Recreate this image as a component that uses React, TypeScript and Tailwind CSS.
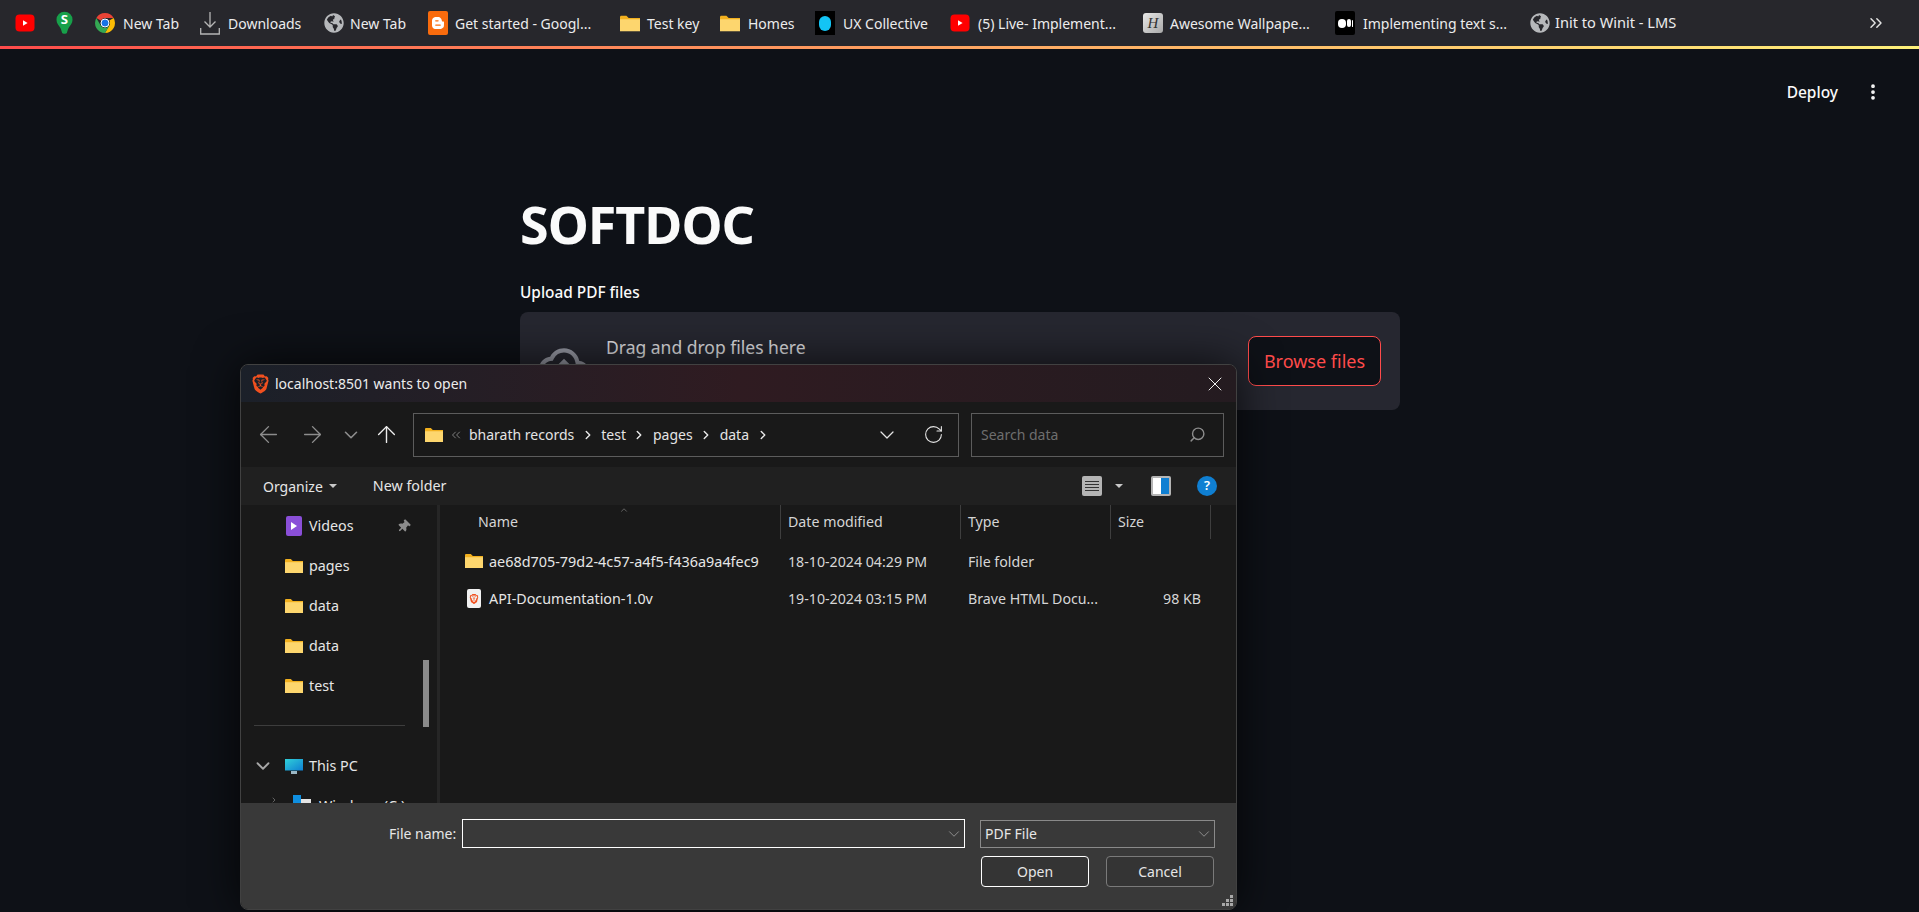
import React from "react";
import { ArrowLeft, ArrowRight, ArrowUp, ChevronDown, ChevronRight, ChevronsLeft, ChevronsRight, EllipsisVertical, RotateCw, Search, X } from "lucide-react";
import { FaBloggerB, FaGlobeAmericas, FaThumbtack } from "react-icons/fa";
import { MdOutlineCloudUpload } from "react-icons/md";
import { SiBrave } from "react-icons/si";

const Folder = ({ className = "w-[18px] h-[14px]" }: { className?: string }) => (
  <svg viewBox="0 0 18 14" className={className}>
    <path d="M0 1.2C0 .5.5 0 1.2 0h4.6l2 2H18v3H0z" fill="#f2b01e" />
    <path d="M0 3.2h18V14H0z" fill="#fdd66e" />
  </svg>
);

const YouTube = () => (
  <svg viewBox="0 0 20 20" className="w-5 h-5">
    <rect x="0.5" y="1.500" width="19" height="17" rx="4" fill="#f00" />
    <path d="M8 7.200v5.600l4.600-2.800z" fill="#fff" />
  </svg>
);

const SPin = () => (
  <svg viewBox="0 0 18 24" className="w-[17px] h-[24px]">
    <path d="M9 0a8.500 8.500 0 0 1 8.500 8.500c0 3.700-2.500 6-4 8.500-1 1.700-1.500 4-2 5.500-.4 1-4.600 1-5 0-.5-1.500-1-3.800-2-5.500C3 14.500.5 12.200.5 8.500A8.500 8.500 0 0 1 9 0z" fill="#17a04a" />
    <text x="9" y="13.500" textAnchor="middle" fontSize="14" fontWeight="700" fill="#fff" fontFamily="Noto Sans, sans-serif">S</text>
  </svg>
);

const Chrome = () => (
  <svg viewBox="0 0 20 20" className="w-5 h-5">
    <path d="M10 0a10 10 0 0 1 8.660 5H10a5 5 0 0 0-4.330 2.500L1.340 5A10 10 0 0 1 10 0z" fill="#ea4335" />
    <path d="M18.660 5A10 10 0 0 1 10 20l4.330-7.500A5 5 0 0 0 14.330 7.500z" fill="#fbbc04" />
    <path d="M10 20A10 10 0 0 1 1.340 5l4.330 7.500A5 5 0 0 0 14.330 12.500z" fill="#34a853" />
    <circle cx="10" cy="10" r="4" fill="#1a73e8" stroke="#fff" strokeWidth="1" />
  </svg>
);

const DownloadTray = () => (
  <svg viewBox="0 0 20 24" className="w-5 h-6" fill="none" stroke="#b5b5b5" strokeWidth="1.300">
    <path d="M10 1v15M4.500 10.500 10 16l5.500-5.500M.7 17v6h18.600v-6" />
  </svg>
);

const Globe = () => <FaGlobeAmericas className="w-5 h-5 text-[#b6b8bb]" />;

const Blogger = () => (
  <span className="w-5 h-6 rounded-[2px] bg-[#f96b0d] flex items-center justify-center">
    <FaBloggerB className="w-3 h-4 text-white" />
  </span>
);

const UxDot = () => (
  <span className="w-5 h-6 bg-black flex items-center justify-center">
    <span className="w-[12px] h-[15px] rounded-full bg-[#13c4f5]" />
  </span>
);

const WallpaperH = () => (
  <span className="w-5 h-5 rounded-[3px] bg-gradient-to-br from-[#e8e8e8] to-[#a9a9a9] flex items-center justify-center font-['Liberation_Serif',serif] italic text-[15px] text-[#333]">
    H
  </span>
);

const Medium = () => (
  <span className="w-5 h-6 rounded-[2px] bg-black flex items-center justify-center gap-[1px]">
    <span className="w-[8px] h-[9px] rounded-full bg-white" />
    <span className="w-[4px] h-[8px] rounded-full bg-white" />
    <span className="w-[1px] h-[7px] rounded-full bg-white" />
  </span>
);

const bookmarks = [
  { icon: <YouTube />, label: "", cls: "w-[41px] gap-[8px]", text: "text-[14px]" },
  { icon: <SPin />, label: "", cls: "w-[39px] gap-[8px]", text: "text-[14px]" },
  { icon: <Chrome />, label: "New Tab", cls: "w-[105px] gap-[8px]", text: "text-[14px]" },
  { icon: <DownloadTray />, label: "Downloads", cls: "w-[124px] gap-[8px]", text: "text-[14px]" },
  { icon: <Globe />, label: "New Tab", cls: "w-[104px] gap-[6px]", text: "text-[14px]" },
  { icon: <Blogger />, label: "Get started - Googl...", cls: "w-[192px] gap-[7px]", text: "text-[14px]" },
  { icon: <Folder className="w-5 h-[17px]" />, label: "Test key", cls: "w-[100px] gap-[7px]", text: "text-[14px]" },
  { icon: <Folder className="w-5 h-[17px]" />, label: "Homes", cls: "w-[95px] gap-[8px]", text: "text-[14px]" },
  { icon: <UxDot />, label: "UX Collective", cls: "w-[135px] gap-[8px]", text: "text-[14px]" },
  { icon: <YouTube />, label: "(5) Live- Implement...", cls: "w-[193px] gap-[8px]", text: "text-[14px]" },
  { icon: <WallpaperH />, label: "Awesome Wallpape...", cls: "w-[192px] gap-[7px]", text: "text-[14px]" },
  { icon: <Medium />, label: "Implementing text s...", cls: "w-[195px] gap-[8px]", text: "text-[14px]" },
  { icon: <Globe />, label: "Init to Winit - LMS", cls: "w-[200px] gap-[5px]", text: "text-[14.600px]" },
];

const BookmarkBar = () => (
  <div className="h-[46px] bg-[#27272c] flex items-center pl-[15px] relative">
    {bookmarks.map((b, i) => (
      <div key={i} className={`${b.cls} flex items-center shrink-0`}>
        {b.icon}
        {b.label && <span className={`${b.text} text-[#ececec] whitespace-nowrap`}>{b.label}</span>}
      </div>
    ))}
    <ChevronsRight className="ml-auto mr-[33px] w-[20px] h-[20px] text-[#e4e4e4]" strokeWidth={1.750} />
  </div>
);

const Uploader = () => (
  <div className="ml-[520px] w-[880px] font-['Noto_Sans',sans-serif]">
    <h1 className="mt-[57px] h-[64px] text-[52px] tracking-[-1px] leading-[64px] font-bold text-[#fafafa]">SOFTDOC</h1>
    <div className="mt-[25px] h-[24px] leading-[24px] text-[15.400px] font-medium text-[#fafafa]">Upload PDF files</div>
    <div className="mt-[7px] h-[98px] rounded-[8px] bg-[#262730] flex justify-between items-center pr-[19px] pl-[19px]">
      <div className="self-start pt-[22px] flex items-start">
        <MdOutlineCloudUpload className="mt-[6px] w-[50px] h-[50px] text-[#9a9ca7]" />
        <span className="ml-[17px] leading-[27px] text-[17.500px] text-[#e0e0e3]">Drag and drop files here</span>
      </div>
      <button className="w-[133px] h-[50px] rounded-[8px] border border-[#ff4b4b] bg-[#0e1117] text-[18px] text-[#ff4b4b]">
        Browse files
      </button>
    </div>
  </div>
);

const navRows = ["pages", "data", "data", "test"];

const NavPane = () => (
  <div className="w-[196px] shrink-0 flex">
    <div className="w-[182px] shrink-0 pt-[1px]">
      <div className="h-[40px] flex items-center pl-[45px]">
        <svg viewBox="0 0 16 20" className="w-[16px] h-[20px]">
          <rect width="16" height="20" rx="2" fill="#8a4fd8" />
          <path d="M5 6v8l6-4z" fill="#fff" />
        </svg>
        <span className="ml-[7px] text-[14.300px] text-[#e6e6e6]">Videos</span>
        <FaThumbtack className="ml-auto mr-[13px] w-[13px] h-[13px] rotate-45 text-[#8c8c8c]" />
      </div>
      {navRows.map((r, i) => (
        <div key={i} className="h-[40px] flex items-center pl-[44px]">
          <Folder />
          <span className="ml-[6px] text-[14.300px] text-[#e6e6e6]">{r}</span>
        </div>
      ))}
      <div className="h-[40px] flex items-center pl-[13px] pr-[18px]">
        <div className="w-full h-px mt-[-1px] bg-[#3d3d3d]" />
      </div>
      <div className="h-[40px] flex items-center pl-[11px]">
        <ChevronDown className="w-[22px] h-[22px] text-[#a8a8a8]" strokeWidth={2} />
        <svg viewBox="0 0 18 15" className="ml-[11px] w-[18px] h-[15px]">
          <defs>
            <linearGradient id="pcScreen" x1="0" y1="0" x2="1" y2="1">
              <stop offset="0" stopColor="#30d0d8" />
              <stop offset="1" stopColor="#0f7fd2" />
            </linearGradient>
          </defs>
          <rect width="18" height="11.500" fill="url(#pcScreen)" />
          <rect x="6" y="12" width="6" height="3" fill="#9bb7c4" />
        </svg>
        <span className="ml-[6px] text-[14.300px] text-[#e6e6e6]">This PC</span>
      </div>
      <div className="h-[40px] flex items-center pl-[29px]">
        <ChevronRight className="w-[8px] h-[8px] self-start mt-[10px] text-[#888]" />
        <span className="ml-[15px] w-[8px] h-[8px] self-start mt-[9px] bg-[#0f8fe0]" />
        <span className="w-[10px] h-[8px] self-start mt-[13px] bg-[#e5e5e5]" />
        <span className="ml-[8px] text-[14.300px] text-[#e6e6e6] whitespace-nowrap">Windows (C:)</span>
      </div>
    </div>
    <div className="w-[6px] h-[67px] mt-[155px] bg-[#8a8a8a]" />
  </div>
);

const headerCell = "h-[34px] flex items-center pl-[7px] border-r border-[#3e3e3e] text-[14.200px] text-[#d5d5d5]";
const cell = "pl-[7px] text-[14.200px] text-[#d6d6d6] whitespace-nowrap";

const FileList = () => (
  <div className="flex-1 border-l-[3px] border-[#262626] relative">
    <ChevronDown className="absolute left-[178px] top-[0px] w-[12px] h-[10px] rotate-180 text-[#8f8f8f]" strokeWidth={1.500} />
    <div className="grid grid-cols-[341px_180px_150px_100px]">
      <div className={`${headerCell} pl-[38px]`}>Name</div>
      <div className={headerCell}>Date modified</div>
      <div className={headerCell}>Type</div>
      <div className={headerCell}>Size</div>
    </div>
    <div className="mt-[4px] grid grid-cols-[341px_180px_150px_100px] grid-rows-[37px_37px] items-center">
      <div className="flex items-center pl-[25px]">
        <Folder />
        <span className="ml-[6px] text-[14.400px] text-[#e6e6e6] whitespace-nowrap">ae68d705-79d2-4c57-a4f5-f436a9a4fec9</span>
      </div>
      <div className={cell}>18-10-2024 04:29 PM</div>
      <div className={cell}>File folder</div>
      <div />
      <div className="flex items-center pl-[27px]">
        <span className="w-[14px] h-[19px] rounded-[2px] bg-[#f1f1f1] flex items-center justify-center">
          <SiBrave className="w-[10px] h-[10px] text-[#f1501f]" />
        </span>
        <span className="ml-[8px] text-[14.300px] text-[#e6e6e6] whitespace-nowrap">API-Documentation-1.0v</span>
      </div>
      <div className={cell}>19-10-2024 03:15 PM</div>
      <div className={cell}>Brave HTML Docu...</div>
      <div className={`${cell} text-right pr-[10px]`}>98 KB</div>
    </div>
  </div>
);

const Crumb = ({ label, className }: { label: string; className: string }) => (
  <>
    <span className="text-[14px] text-[#e4e4e4]">{label}</span>
    <ChevronRight className={`${className} w-[14px] h-[14px] text-[#e4e4e4]`} strokeWidth={2.500} />
  </>
);

const FileDialog = () => (
  <div className="absolute left-[240px] top-[364px] w-[997px] h-[546px] rounded-[8px] border border-[#414141] overflow-hidden bg-[#191919] shadow-[0_0_45px_rgba(0,0,0,0.75)] font-['Noto_Sans',sans-serif] flex flex-col">
    <div className="h-[37px] shrink-0 flex items-center pl-[10px] pr-[9px] bg-gradient-to-r from-[#1b2029] via-[#2f1b21] to-[#241b20]">
      <SiBrave className="w-[19px] h-[20px] text-[#f1501f]" />
      <span className="ml-[5px] text-[14px] text-[#ececec]">localhost:8501 wants to open</span>
      <X className="ml-auto w-[24px] h-[24px] text-[#f0f0f0]" strokeWidth={1} />
    </div>

    <div className="h-[65px] shrink-0 flex items-center bg-[#191919]">
      <ArrowLeft className="ml-[14px] w-[27px] h-[27px] text-[#8c8c8c]" strokeWidth={1.250} />
      <ArrowRight className="ml-[17px] w-[27px] h-[27px] text-[#8c8c8c]" strokeWidth={1.250} />
      <ChevronDown className="ml-[14px] w-[22px] h-[22px] text-[#8c8c8c]" strokeWidth={1.750} />
      <ArrowUp className="ml-[11px] w-[27px] h-[27px] text-[#ececec]" strokeWidth={1.250} />
      <div className="ml-[13px] w-[546px] h-[44px] border border-[#5c5c5c] flex items-center pl-[11px] pr-[14px]">
        <Folder />
        <ChevronsLeft className="ml-[6px] w-[14px] h-[14px] text-[#8c8c8c]" strokeWidth={1.500} />
        <span className="ml-[6px]" />
        <Crumb label="bharath records" className="mx-[6.500px]" />
        <Crumb label="test" className="mx-[6.500px]" />
        <Crumb label="pages" className="mx-[6.500px]" />
        <Crumb label="data" className="ml-[6.500px]" />
        <ChevronDown className="ml-auto w-[24px] h-[24px] text-[#e4e4e4]" strokeWidth={1.250} />
        <RotateCw className="ml-[24px] w-[21px] h-[21px] text-[#e4e4e4]" strokeWidth={1.250} />
      </div>
      <div className="ml-[12px] w-[253px] h-[44px] border border-[#5c5c5c] flex items-center pl-[9px] pr-[17px]">
        <span className="text-[14px] text-[#6e6e6e]">Search data</span>
        <Search className="ml-auto w-[17px] h-[17px] -scale-x-100 text-[#8c8c8c]" strokeWidth={2} />
      </div>
    </div>

    <div className="h-[38px] shrink-0 flex items-center bg-[#202020] pl-[22px]">
      <span className="text-[14px] text-[#e6e6e6]">Organize</span>
      <span className="ml-[6px] border-x-[4px] border-x-transparent border-t-[4px] border-t-[#c8c8c8]" />
      <span className="ml-[36px] text-[14.300px] text-[#e6e6e6]">New folder</span>
      <span className="ml-auto w-[20px] h-[20px] rounded-[2px] bg-[#b4b4b4] flex flex-col justify-center gap-[2px] px-[3px]">
        <span className="h-px bg-[#333]" />
        <span className="h-px bg-[#333]" />
        <span className="h-px bg-[#333]" />
        <span className="h-px bg-[#333]" />
      </span>
      <span className="ml-[13px] border-x-[4px] border-x-transparent border-t-[4px] border-t-[#c8c8c8]" />
      <span className="ml-[28px] w-[20px] h-[20px] rounded-[2px] bg-[#b4b4b4] p-[2px] flex">
        <span className="w-1/2 bg-white" />
        <span className="w-1/2 bg-[#0f7fd2]" />
      </span>
      <span className="ml-[26px] mr-[19px] w-[20px] h-[20px] rounded-full bg-[#0f7fd2] flex items-center justify-center text-[13px] font-semibold text-white">
        ?
      </span>
    </div>

    <div className="h-[298px] shrink-0 flex overflow-hidden bg-[#191919]">
      <NavPane />
      <FileList />
    </div>

    <div className="flex-1 bg-[#393939] pt-[16px] relative">
      <div className="flex items-center h-[29px]">
        <span className="ml-[148px] w-[67px] text-[14px] text-[#e6e6e6] whitespace-nowrap">File name:</span>
        <div className="ml-[6px] w-[503px] h-[29px] border border-white flex items-center justify-end pr-[1px]">
          <ChevronDown className="w-[18px] h-[18px] text-[#a8a8a8]" strokeWidth={1} />
        </div>
        <div className="ml-[15px] w-[235px] h-[28px] border border-[#8a8a8a] flex items-center justify-between pl-[4px] pr-[1px]">
          <span className="text-[14px] text-[#e6e6e6]">PDF File</span>
          <ChevronDown className="w-[18px] h-[18px] text-[#a8a8a8]" strokeWidth={1} />
        </div>
      </div>
      <div className="mt-[8px] flex justify-end gap-[17px] pr-[22px]">
        <button className="w-[108px] h-[31px] rounded-[4px] border border-white bg-[#343434] text-[14px] text-[#e6e6e6]">Open</button>
        <button className="w-[108px] h-[31px] rounded-[4px] border border-[#7a7a7a] bg-[#343434] text-[14px] text-[#e6e6e6]">Cancel</button>
      </div>
      <div className="absolute right-[3px] bottom-[3px] grid grid-cols-3 gap-[1px] w-[11px]">
        <span /><span /><span className="h-[3px] bg-[#a8a8a8]" />
        <span /><span className="h-[3px] bg-[#a8a8a8]" /><span className="h-[3px] bg-[#a8a8a8]" />
        <span className="h-[3px] bg-[#a8a8a8]" /><span className="h-[3px] bg-[#a8a8a8]" /><span className="h-[3px] bg-[#a8a8a8]" />
      </div>
    </div>
  </div>
);

const App = () => {
  return (
    <div className="relative h-screen overflow-hidden bg-[#0e1117] font-['Noto_Sans',sans-serif]">
      <BookmarkBar />
      <div className="h-[3px] bg-gradient-to-r from-[#ff4b4b] to-[#fdf07a]" />
      <div className="h-[86px] flex items-center justify-end pr-[36px]">
        <span className="mt-[1px] text-[15.500px] font-medium text-[#fafafa]">Deploy</span>
        <EllipsisVertical className="ml-[25px] w-[20px] h-[20px] text-[#fafafa]" strokeWidth={2.500} />
      </div>
      <Uploader />
      <FileDialog />
    </div>
  );
};

export default App;
